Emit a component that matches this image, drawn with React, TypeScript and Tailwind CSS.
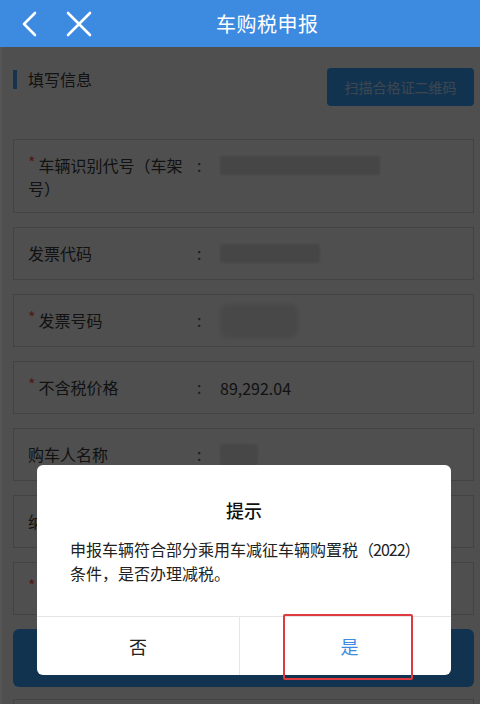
import React from "react";

const font = { fontFamily: '"Noto Sans CJK SC", "Noto Sans", sans-serif' };

function Row({
  label,
  star,
  children,
  tall,
}: {
  label: React.ReactNode;
  star?: boolean;
  children?: React.ReactNode;
  tall?: boolean;
}) {
  return (
    <div
      className={`border border-[#d9d9d9] flex ${
        tall ? "h-[74px] items-start pt-[14px]" : "h-[53px] items-center"
      } pl-[14px]`}
    >
      <div className="w-[169px] pr-[10px] text-[16px] leading-[23px] text-[#3a3a3a]">
        {star && <span className="text-[#ff5040] mr-[3px] relative -top-[3px]">*</span>}
        {label}
      </div>
      <div className="w-[23px] text-[16px] leading-[23px] text-[#555]">:</div>
      <div className="flex-1 flex items-center h-[23px] text-[16px] text-[#3a3a3a]">{children}</div>
    </div>
  );
}

export default function App() {
  return (
    <div className="relative w-[480px] h-[704px] overflow-hidden bg-white" style={font}>
      {/* Header */}
      <div className="h-[47px] bg-[#3d8ae1] flex items-center relative">
        <svg className="ml-[20px]" width="18" height="26" viewBox="0 0 18 26" fill="none">
          <path d="M15 2 L4 13 L15 24" stroke="white" strokeWidth="2.6" strokeLinecap="round" strokeLinejoin="round" />
        </svg>
        <svg className="ml-[28px]" width="26" height="26" viewBox="0 0 26 26" fill="none">
          <path d="M2 2 L24 24 M24 2 L2 24" stroke="white" strokeWidth="2.6" strokeLinecap="round" />
        </svg>
        <div className="ml-[124px] text-white text-[20px] leading-[28px] tracking-[0.5px]">车购税申报</div>
      </div>

      {/* Body */}
      <div className="pl-[13px] pr-[6px]">
        <div className="mt-[21px] flex justify-between items-start">
          <div className="flex items-center mt-[1px]">
            <div className="w-[4px] h-[19px] bg-[#4aa8ff]" />
            <div className="ml-[11px] text-[16px] leading-[20px] text-[#3a3a3a]">填写信息</div>
          </div>
          <div className="w-[147px] h-[38px] rounded-[4px] bg-[#3aa6ff] flex items-center justify-center text-[14px] text-[#c8e0ff]">
            扫描合格证二维码
          </div>
        </div>

        <div className="mt-[33px] flex flex-col gap-[14px]">
          <Row label="车辆识别代号（车架号）" star tall>
            <div className="w-[160px] h-[19px] bg-[#e0e0e0] rounded-[2px] blur-[1px]" />
          </Row>
          <Row label="发票代码">
            <div className="w-[100px] h-[19px] bg-[#e3e3e3] rounded-[3px] blur-[1px]" />
          </Row>
          <Row label="发票号码" star>
            <div className="w-[78px] h-[34px] bg-[#e8e8e8] rounded-[8px] blur-[2px]" />
          </Row>
          <Row label="不含税价格" star>
            89,292.04
          </Row>
          <Row label="购车人名称">
            <div className="w-[38px] h-[22px] bg-[#e5e5e5] rounded-[3px] blur-[1px]" />
          </Row>
          <Row label="纳税人名称" />
          <Row label="" star />
          <div className="h-[58px] rounded-[6px] bg-[#3aa6ff]" />
          <div className="h-[53px] border border-[#d9d9d9] -mt-[2px]" />
        </div>
      </div>

      {/* Mask */}
      <div className="absolute left-0 right-0 top-[47px] bottom-0 bg-black/[0.69]" />
      <div className="absolute left-0 top-[47px] w-[2px] h-[657px] bg-white/[0.04]" />

      {/* Modal */}
      <div className="absolute left-[37px] top-[465px] w-[414px] h-[210px] bg-white rounded-[6px] flex flex-col">
        <div className="h-[151px] flex flex-col">
          <div className="pt-[33px] text-center text-[18px] leading-[24px] font-medium text-[#111]">提示</div>
          <div className="mt-[15px] pl-[33px] text-[16px] leading-[24px] text-[#222] whitespace-nowrap">
            申报车辆符合部分乘用车减征车辆购置税<span className="tracking-[-1px]">（2022）</span>
            <br />
            条件，是否办理减税。
          </div>
        </div>
        <div className="flex-1 flex border-t border-[#e6e6e6]">
          <div className="w-[203px] flex items-center justify-center text-[18px] text-[#222] border-r border-[#e6e6e6]">
            否
          </div>
          <div className="flex-1 flex items-center justify-center text-[18px] text-[#3d8ae1] pl-[8px]">是</div>
        </div>
      </div>

      {/* Red highlight */}
      <div className="absolute left-[283px] top-[614px] w-[130px] h-[66px] border-2 border-[#e0393e] rounded-[2px]" />
    </div>
  );
}
